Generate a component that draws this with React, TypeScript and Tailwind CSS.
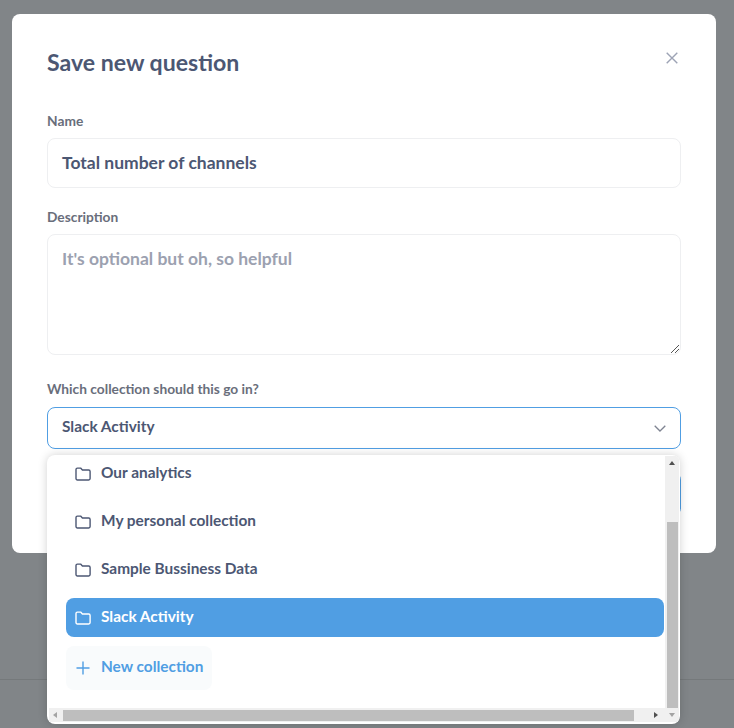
import React from "react";

function Folder({ className }: { className?: string }) {
  return (
    <svg viewBox="0 0 16 14" width="16" height="14" fill="none" stroke="currentColor" strokeWidth="1.4" strokeLinejoin="round" className={className}>
      <path d="M1 2.6C1 1.7 1.6 1.1 2.4 1.1H5.6L7.4 3H13.7C14.5 3 15.1 3.6 15.1 4.4V11.6C15.1 12.4 14.5 13 13.7 13H2.4C1.6 13 1 12.4 1 11.6V2.6Z" />
    </svg>
  );
}

function Item({ label, active }: { label: string; active?: boolean }) {
  return (
    <div className={`flex h-[39px] items-center rounded-lg pl-[9px] ${active ? "bg-[#509ee3] text-white" : "text-[#4c5773]"}`}>
      <Folder className="mr-[10px]" />
      <span className="mb-[4px] text-[15.4px] leading-5 font-bold">{label}</span>
    </div>
  );
}

export default function App() {
  return (
    <div className="relative h-[728px] w-[734px] overflow-hidden bg-[#818588] font-['Lato','Noto_Sans',sans-serif]">
      <div className="absolute top-[679px] right-0 left-0 h-px bg-[#75797b]" />
      <div className="relative mx-[12px] mt-[14px] h-[539px] w-[704px] rounded-lg bg-white px-[35px] pt-[34px]">
        <div className="flex items-start justify-between">
          <h1 className="text-[23.1px] leading-7 font-bold text-[#4c5773]">Save new question</h1>
          <svg viewBox="0 0 12 12" width="12" height="12" fill="none" stroke="#9da3b5" strokeWidth="1.4" className="mt-[4px] mr-[3px]">
            <path d="M0.7 0.7L11.3 11.3M11.3 0.7L0.7 11.3" />
          </svg>
        </div>

        <label className="mt-[36px] block text-[13.75px] leading-[18px] font-bold text-[#696e7b]">Name</label>
        <div className="mt-2 flex h-[50px] items-center rounded-lg border border-[#eeeff1] px-[14px] text-[17.5px] font-bold text-[#4c5773]">
          Total number of channels
        </div>

        <label className="mt-5 block text-[13.75px] leading-[18px] font-bold text-[#696e7b]">Description</label>
        <div className="relative mt-2 h-[121px] rounded-lg border border-[#eeeff1] px-[14px] pt-[13px] text-[17.5px] leading-[22px] font-bold text-[#9ca1b0]">
          It's optional but oh, so helpful
          <svg viewBox="0 0 10 10" width="10" height="10" fill="none" stroke="#555" strokeWidth="1" className="absolute right-0 bottom-0">
            <path d="M1 9L9 1M5 9L9 5" />
          </svg>
        </div>

        <label className="mt-[25px] block text-[13.75px] leading-[18px] font-bold text-[#696e7b]">Which collection should this go in?</label>
        <div className="relative mt-[9px]">
          <div className="flex h-[42px] items-center justify-between rounded-lg border border-[#509ee3] pr-[14px] pl-[14px] text-[15.4px] font-bold text-[#4c5773]">
            <span className="mb-[2px]">Slack Activity</span>
            <svg viewBox="0 0 12 7" width="12" height="7" fill="none" stroke="#7f8492" strokeWidth="1.3">
              <path d="M0.7 0.7L6 6L11.3 0.7" />
            </svg>
          </div>

          <div className="mt-[23px] flex justify-end">
            <div className="flex h-[44px] w-[100px] items-center justify-center rounded-lg bg-[#509ee3] text-sm font-bold text-white">Save</div>
          </div>

          <div className="absolute top-[48px] left-0 flex h-[269px] w-[633px] flex-col overflow-hidden rounded-lg bg-white pt-px pr-px pb-[2px] pl-[2px] shadow-[0_0_10px_rgba(0,0,0,0.18)]">
            <div className="flex min-h-0 flex-1">
              <div className="flex-1 overflow-hidden pr-px pl-[17px]">
                <div className="-mt-[2px] flex flex-col gap-[9px]">
                  <Item label="Our analytics" />
                  <Item label="My personal collection" />
                  <Item label="Sample Bussiness Data" />
                  <Item label="Slack Activity" active />
                </div>
                <div className="mt-[9px] flex h-[44px] w-[146px] items-center rounded-lg bg-[#f9fbfc] pl-[9px] text-[15.4px] font-bold text-[#509ee3]">
                  <svg viewBox="0 0 14 14" width="14" height="14" fill="none" stroke="currentColor" strokeWidth="1.4" className="mr-[11px] ml-px">
                    <path d="M7 0.5V13.5M0.5 7H13.5" />
                  </svg>
                  <span className="mb-[2px]">New collection</span>
                </div>
              </div>
              <div className="flex w-[14px] shrink-0 flex-col items-center bg-[#f0f0f0]">
                <div className="mt-[5px] h-0 w-0 border-x-[3.5px] border-b-[4px] border-x-transparent border-b-[#505050]" />
                <div className="mt-[57px] w-[11px] flex-1 bg-[#bebebe]" />
              </div>
            </div>
            <div className="flex h-[14px] shrink-0 items-center bg-[#f0f0f0]">
              <div className="ml-[4px] h-0 w-0 border-y-[3.5px] border-r-[4px] border-y-transparent border-r-[#a3a3a3]" />
              <div className="ml-[6px] h-[11px] w-[571px] bg-[#bebebe]" />
              <div className="ml-[20px] h-0 w-0 border-y-[3.5px] border-l-[4px] border-y-transparent border-l-[#505050]" />
              <div className="ml-[11px] h-0 w-0 border-x-[3.5px] border-t-[4px] border-x-transparent border-t-[#a3a3a3]" />
            </div>
          </div>
        </div>
      </div>
    </div>
  );
}
